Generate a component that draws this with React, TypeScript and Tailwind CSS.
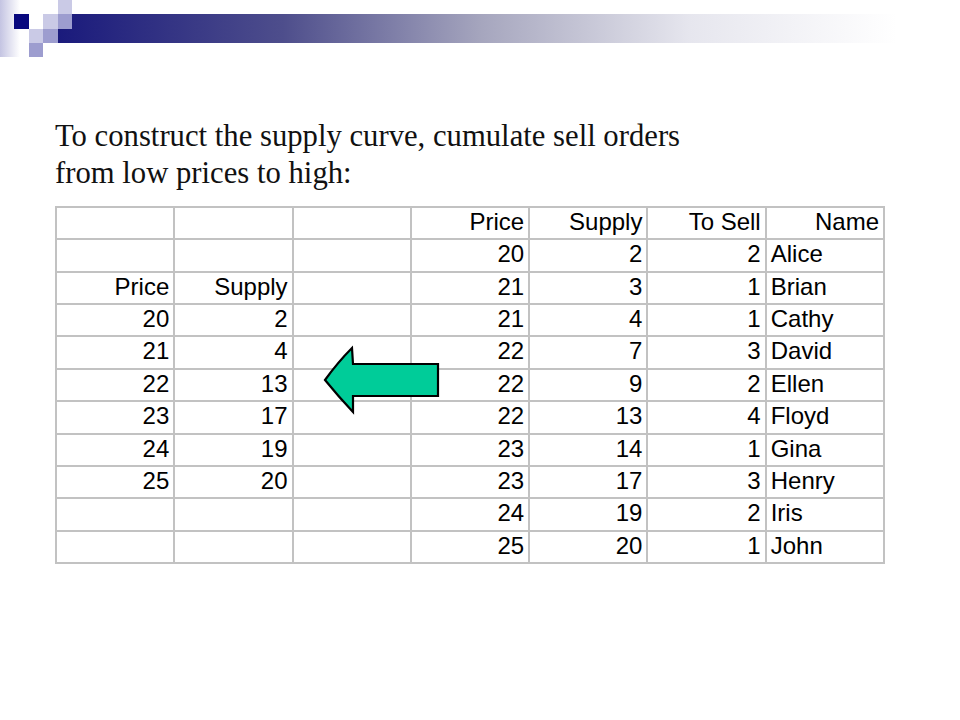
import React from "react";

const rows: string[][] = [
  ["", "", "", "Price", "Supply", "To Sell", "Name"],
  ["", "", "", "20", "2", "2", "Alice"],
  ["Price", "Supply", "", "21", "3", "1", "Brian"],
  ["20", "2", "", "21", "4", "1", "Cathy"],
  ["21", "4", "", "22", "7", "3", "David"],
  ["22", "13", "", "22", "9", "2", "Ellen"],
  ["23", "17", "", "22", "13", "4", "Floyd"],
  ["24", "19", "", "23", "14", "1", "Gina"],
  ["25", "20", "", "23", "17", "3", "Henry"],
  ["", "", "", "24", "19", "2", "Iris"],
  ["", "", "", "25", "20", "1", "John"],
];

function HeaderDecoration() {
  return (
    <svg width="960" height="60" viewBox="0 0 960 60" className="block">
      <defs>
        <linearGradient id="bar" x1="58" y1="0" x2="960" y2="0" gradientUnits="userSpaceOnUse">
          <stop offset="0" stopColor="#1a1a7c" />
          <stop offset="0.25" stopColor="#4e4e8c" />
          <stop offset="0.47" stopColor="#a6a6be" />
          <stop offset="0.7" stopColor="#e6e6ee" />
          <stop offset="0.93" stopColor="#ffffff" />
          <stop offset="1" stopColor="#ffffff" />
        </linearGradient>
        <linearGradient id="strip" x1="0" y1="0" x2="20" y2="0" gradientUnits="userSpaceOnUse">
          <stop offset="0" stopColor="#c4c4e2" />
          <stop offset="1" stopColor="#ffffff" />
        </linearGradient>
      </defs>
      <rect x="0" y="0" width="20" height="57" fill="url(#strip)" />
      <rect x="58" y="29" width="902" height="14" fill="url(#bar)" />
      <rect x="72" y="14" width="888" height="15" fill="url(#bar)" />
      <rect x="14" y="14" width="15" height="15" fill="#08087e" />
      <rect x="43" y="14" width="15" height="15" fill="#cacae6" />
      <rect x="58" y="0" width="14" height="14" fill="#cacae6" />
      <rect x="58" y="14" width="14" height="15" fill="#9d9dcf" />
      <rect x="29" y="29" width="14" height="14" fill="#cacae6" />
      <rect x="43" y="29" width="15" height="14" fill="#9d9dcf" />
      <rect x="29" y="43" width="14" height="14" fill="#9d9dcf" />
    </svg>
  );
}

export default function App() {
  return (
    <div className="relative w-[960px] h-[720px] bg-white overflow-hidden">
      <HeaderDecoration />
      <div
        className="mt-[58px] pl-[55px] text-[30.7px] leading-[37px] text-[#111]"
        style={{ fontFamily: '"Liberation Serif", "Times New Roman", serif' }}
      >
        <div>To construct the supply curve, cumulate sell orders</div>
        <div>from low prices to high:</div>
      </div>
      <div className="mt-[14px] ml-[55px] w-[830px] h-[358px] p-[2px] bg-[#c2c2c2] grid grid-cols-7 grid-rows-[repeat(11,minmax(0,1fr))] gap-[2px]">
        {rows.map((r, ri) =>
          r.map((c, ci) => (
            <div
              key={`${ri}-${ci}`}
              className={`bg-white text-[24px] leading-[28px] text-black overflow-hidden whitespace-nowrap ${
                ci === 6 && ri > 0 ? "text-left pl-[4px]" : "text-right pr-[4px]"
              }`}
              style={{ fontFamily: '"Liberation Sans", Arial, sans-serif' }}
            >
              {c}
            </div>
          ))
        )}
      </div>
      <svg
        className="absolute left-[320px] top-[344px]"
        width="124"
        height="74"
        viewBox="0 0 124 74"
      >
        <path
          d="M5 36 Q18 18 32 4 L33 20 L118 20 L118 52 L33 52 L33 68 Q18 52 5 36 Z"
          fill="#00cc99"
          stroke="#000"
          strokeWidth="2.2"
          strokeLinejoin="miter"
        />
      </svg>
    </div>
  );
}
